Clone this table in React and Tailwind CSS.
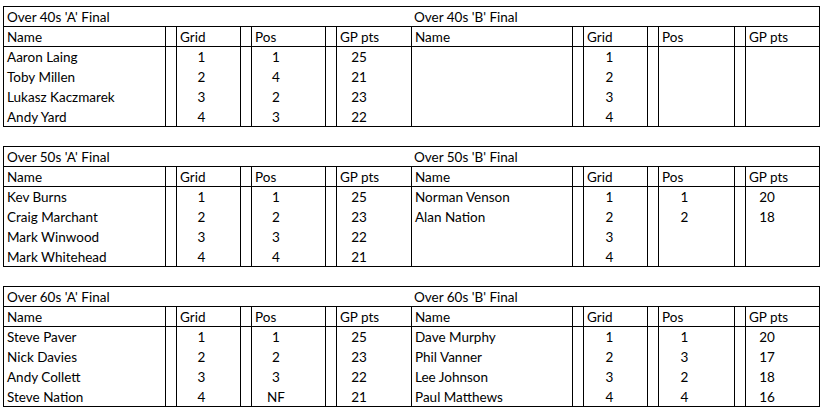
const cols = 'grid-cols-[161px_11px_64px_11px_74px_11px_75px_161px_11px_64px_11px_76px_11px_74px]';

// width of the box the numbers are centred in, per numeric column
const numW = { gridA: 'w-[49px]', posA: 'w-[48px]', gpA: 'w-[44px]', gridB: 'w-[51px]', posB: 'w-[51px]', gpB: 'w-[42px]' };

const finals = [
  {
    a: "Over 40s 'A' Final",
    b: "Over 40s 'B' Final",
    rows: [
      ['Aaron Laing', '1', '1', '25', '', '1', '', ''],
      ['Toby Millen', '2', '4', '21', '', '2', '', ''],
      ['Lukasz Kaczmarek', '3', '2', '23', '', '3', '', ''],
      ['Andy Yard', '4', '3', '22', '', '4', '', ''],
    ],
  },
  {
    a: "Over 50s 'A' Final",
    b: "Over 50s 'B' Final",
    rows: [
      ['Kev Burns', '1', '1', '25', 'Norman Venson', '1', '1', '20'],
      ['Craig Marchant', '2', '2', '23', 'Alan Nation', '2', '2', '18'],
      ['Mark Winwood', '3', '3', '22', '', '3', '', ''],
      ['Mark Whitehead', '4', '4', '21', '', '4', '', ''],
    ],
  },
  {
    a: "Over 60s 'A' Final",
    b: "Over 60s 'B' Final",
    rows: [
      ['Steve Paver', '1', '1', '25', 'Dave Murphy', '1', '1', '20'],
      ['Nick Davies', '2', '2', '23', 'Phil Vanner', '2', '3', '17'],
      ['Andy Collett', '3', '3', '22', 'Lee Johnson', '3', '2', '18'],
      ['Steve Nation', '4', 'NF', '21', 'Paul Matthews', '4', '4', '16'],
    ],
  },
];

const Num = ({ w, children }) => (
  <div className="border-l border-black">
    <div className={`${w} text-center`}>{children}</div>
  </div>
);

const Name = ({ first, children }) => (
  <div className={`pl-[3px] whitespace-nowrap ${first ? '' : 'border-l border-black'}`}>{children}</div>
);

const Gap = () => <div className="border-l border-black" />;

const Row = ({ r, h }) => (
  <div className={`grid ${cols} ${h}`}>
    <Name first>{r[0]}</Name>
    <Gap />
    <Num w={numW.gridA}>{r[1]}</Num>
    <Gap />
    <Num w={numW.posA}>{r[2]}</Num>
    <Gap />
    <Num w={numW.gpA}>{r[3]}</Num>
    <Name>{r[4]}</Name>
    <Gap />
    <Num w={numW.gridB}>{r[5]}</Num>
    <Gap />
    <Num w={numW.posB}>{r[6]}</Num>
    <Gap />
    <Num w={numW.gpB}>{r[7]}</Num>
  </div>
);

const Block = ({ f, first }) => (
  <div className={`w-[817px] border border-black ${first ? '' : 'mt-[19px]'}`}>
    <div className={`grid ${cols} h-[20px] border-b border-black`}>
      <div className="col-span-7 pl-[3px]">{f.a}</div>
      <div className="col-span-7 pl-[3px]">{f.b}</div>
    </div>
    <div className={`grid ${cols} h-[20px] border-b border-black`}>
      <div className="pl-[3px]">Name</div>
      <Gap />
      <div className="border-l border-black pl-[3px]">Grid</div>
      <Gap />
      <div className="border-l border-black pl-[3px]">Pos</div>
      <Gap />
      <div className="border-l border-black pl-[3px]">GP pts</div>
      <div className="border-l border-black pl-[3px]">Name</div>
      <Gap />
      <div className="border-l border-black pl-[3px]">Grid</div>
      <Gap />
      <div className="border-l border-black pl-[3px]">Pos</div>
      <Gap />
      <div className="border-l border-black pl-[3px]">GP pts</div>
    </div>
    {f.rows.map((r, i) => (
      <Row key={i} r={r} h={i === 3 ? 'h-[19px]' : 'h-[20px]'} />
    ))}
  </div>
);

export default function App() {
  return (
    <div
      className="w-[824px] h-[413px] bg-white text-black pt-[6px] pl-[3px] text-[13.5px] leading-[20px]"
      style={{ fontFamily: 'Lato, "Liberation Sans", sans-serif' }}
    >
      {finals.map((f, i) => (
        <Block key={i} f={f} first={i === 0} />
      ))}
    </div>
  );
}
